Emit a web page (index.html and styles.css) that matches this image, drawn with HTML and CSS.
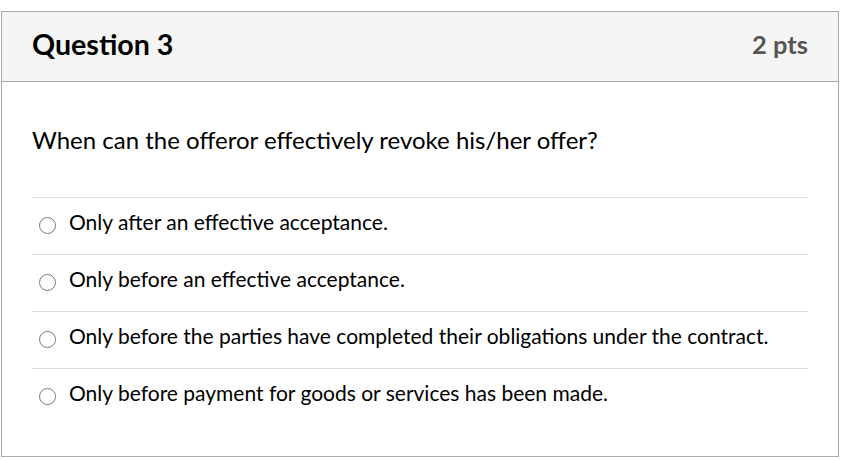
FILE: index.html
```html
<!DOCTYPE html>
<html lang="en">
<head>
<meta charset="utf-8">
<title>Question 3</title>
<link rel="stylesheet" href="styles.css">
</head>
<body>
<div class="card">
  <div class="card-header">
    <h2 class="title">Question 3</h2>
    <span class="points">2 pts</span>
  </div>
  <div class="card-body">
    <p class="question">When can the offeror effectively revoke his/her offer?</p>
    <div class="answers">
      <label class="answer"><span class="radio"></span><span class="answer-text">Only after an effective acceptance.</span></label>
      <label class="answer"><span class="radio"></span><span class="answer-text">Only before an effective acceptance.</span></label>
      <label class="answer"><span class="radio"></span><span class="answer-text">Only before the parties have completed their obligations under the contract.</span></label>
      <label class="answer"><span class="radio"></span><span class="answer-text">Only before payment for goods or services has been made.</span></label>
    </div>
  </div>
</div>
</body>
</html>
```

FILE: styles.css
```css
* { box-sizing: border-box; }
html, body { margin: 0; padding: 0; background: #fff; }
body {
  font-family: Lato, "Noto Sans", sans-serif;
  color: #000;
  padding-top: 11px;
  padding-left: 1px;
}
.card {
  width: 838px;
  height: 446px;
  border: 1px solid #aaa;
  display: flex;
  flex-direction: column;
}
.card-header {
  height: 70px;
  background: #f5f5f5;
  border-bottom: 1px solid #aaa;
  display: flex;
  align-items: flex-start;
  justify-content: space-between;
  padding: 16px 30px 0;
}
.title {
  margin: 0;
  font-size: 28.6px;
  font-weight: 700;
  line-height: 32px;
  color: #000;
}
.points {
  font-size: 25.5px;
  font-weight: 700;
  line-height: 32px;
  color: #555;
}
.card-body {
  padding: 44px 30px 0;
}
.question {
  margin: 0 0 43px;
  font-size: 24px;
  line-height: 28px;
}
.answers { display: flex; flex-direction: column; }
.answer {
  display: flex;
  align-items: flex-start;
  border-top: 1px solid #ddd;
  padding: 12px 0 20px;
  font-size: 21px;
  line-height: 24px;
}
.radio {
  flex: none;
  width: 17px;
  height: 17px;
  margin: 7px 13px 0 7px;
  border: 1.5px solid #777;
  border-radius: 50%;
  background: #fff;
}
```
